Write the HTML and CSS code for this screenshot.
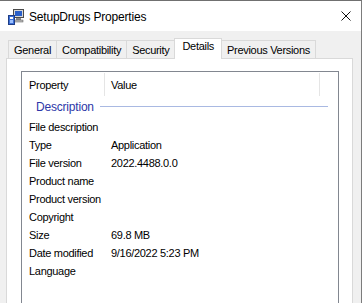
FILE: index.html
```html
<!DOCTYPE html>
<html lang="en">
<head>
  <meta charset="UTF-8">
  <title>SetupDrugs Properties</title>
  <link rel="stylesheet" href="styles.css">
</head>
<body>
  <div class="window">
    <div class="titlebar">
      <svg class="app-icon" width="16" height="16" viewBox="0 0 16 16">
        <rect x="5.5" y="0.5" width="10" height="8" fill="#d8d8d8" stroke="#4a4a4a"/>
        <rect x="7" y="2" width="7" height="5" fill="#2a5fc8"/>
        <rect x="8" y="9" width="5" height="2" fill="#8a8a8a"/>
        <rect x="6" y="11" width="9" height="2" fill="#bdbdbd" stroke="#555" stroke-width="0.5"/>
        <rect x="0.5" y="6.5" width="6" height="9" fill="#3b6fd6" stroke="#1f3d86"/>
        <rect x="2" y="8" width="3" height="2" fill="#ffffff"/>
        <rect x="2" y="11" width="3" height="3" fill="#9cc0ff"/>
      </svg>
      <span class="title">SetupDrugs Properties</span>
      <svg class="close" width="10" height="10" viewBox="0 0 10 10">
        <path d="M0.5 0.5 L9.5 9.5 M9.5 0.5 L0.5 9.5" stroke="#111" stroke-width="1"/>
      </svg>
    </div>

    <div class="content">
      <div class="tabs">
        <div class="tab">General</div>
        <div class="tab">Compatibility</div>
        <div class="tab">Security</div>
        <div class="tab active">Details</div>
        <div class="tab">Previous Versions</div>
      </div>

      <div class="panel">
        <div class="list">
          <div class="list-head">
            <div class="head-cell prop-head">Property</div>
            <div class="head-cell value-head">Value</div>
          </div>

          <div class="group">
            <span class="group-name">Description</span>
            <span class="group-line"></span>
          </div>

          <div class="row"><span>File description</span><span></span></div>
          <div class="row"><span>Type</span><span>Application</span></div>
          <div class="row"><span>File version</span><span>2022.4488.0.0</span></div>
          <div class="row"><span>Product name</span><span></span></div>
          <div class="row"><span>Product version</span><span></span></div>
          <div class="row"><span>Copyright</span><span></span></div>
          <div class="row"><span>Size</span><span>69.8 MB</span></div>
          <div class="row"><span>Date modified</span><span>9/16/2022 5:23 PM</span></div>
          <div class="row"><span>Language</span><span></span></div>
        </div>
      </div>
    </div>
  </div>
</body>
</html>
```

FILE: styles.css
```css
body {
  margin: 0;
  font-family: "Liberation Sans", Arial, sans-serif;
  font-size: 11px;
  letter-spacing: -0.3px;
  color: #000;
  background-color: #fff;
}
.window {
  width: 362px;
  height: 303px;
  box-sizing: border-box;
  border-top: 1px solid #707070;
  border-right: 1px solid #7c7c7c;
  display: flex;
  flex-direction: column;
  overflow: hidden;
}
.titlebar {
  height: 30px;
  flex-shrink: 0;
  background-color: #fff;
  display: flex;
  align-items: center;
  padding-left: 8px;
}
.app-icon {
  display: block;
  margin-top: 1px;
}
.title {
  font-size: 12px;
  letter-spacing: -0.2px;
  margin-left: 5px;
  margin-top: 1px;
}
.close {
  display: block;
  margin-left: auto;
  margin-right: 10px;
}
.content {
  flex: 1;
  background-color: #f0f0f0;
  padding: 7px 8px 0 6px;
}
.tabs {
  display: flex;
  align-items: flex-end;
  height: 20px;
  padding-left: 2px;
}
.tab {
  height: 18px;
  box-sizing: border-box;
  border: 1px solid #d9d9d9;
  border-bottom: none;
  background-color: #f0f0f0;
  padding: 2px 5px 0;
  line-height: 15px;
  margin-right: -1px;
}
.tab.active {
  height: 21px;
  background-color: #fff;
  padding: 0 7px;
  margin-bottom: -1px;
  position: relative;
  z-index: 1;
}
.panel {
  height: 280px;
  background-color: #fff;
  border: 1px solid #d9d9d9;
  padding: 12px 13px 0 14px;
}
.list {
  height: 260px;
  border: 1px solid #828790;
  background-color: #fff;
}
.list-head {
  display: flex;
  height: 24px;
}
.head-cell {
  box-sizing: border-box;
  height: 23px;
  margin-top: 1px;
  padding-top: 1px;
  line-height: 22px;
  border-right: 1px solid #e5e5e5;
}
.prop-head {
  width: 83px;
  padding-left: 7px;
}
.value-head {
  width: 215px;
  padding-left: 6px;
}
.group {
  display: flex;
  align-items: center;
  height: 21px;
  margin-bottom: 1px;
  padding-left: 14px;
  padding-right: 10px;
}
.group-name {
  font-size: 12px;
  letter-spacing: -0.2px;
  color: #2d37a8;
  line-height: 14px;
  margin-top: 1px;
}
.group-line {
  flex: 1;
  height: 1px;
  margin-left: 6px;
  background-color: #a9b9e2;
}
.row {
  display: grid;
  grid-template-columns: 82px 1fr;
  padding-left: 7px;
  line-height: 18px;
}
```
